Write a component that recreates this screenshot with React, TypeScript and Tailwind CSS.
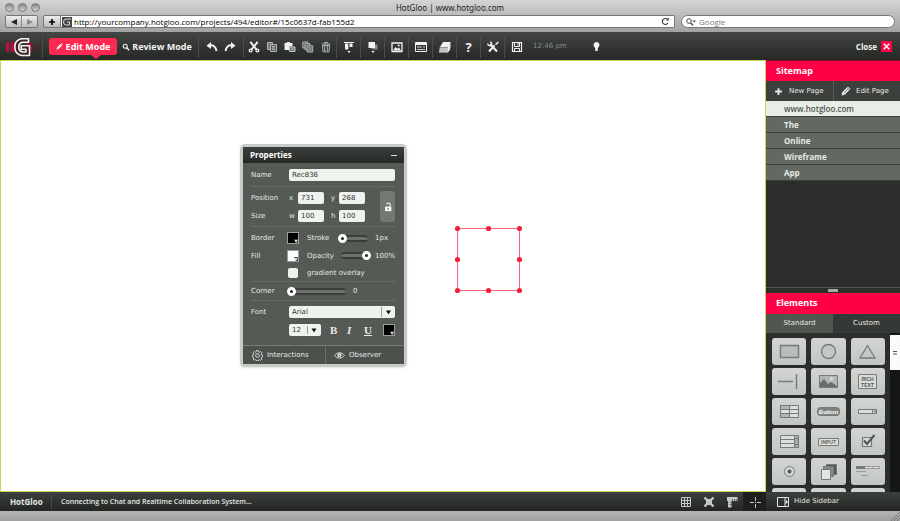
import React, { useState } from 'react';

type IconProps = { children: React.ReactNode; size?: number; className?: string };

const Icon: React.FC<IconProps> = ({ children, size = 12, className = '' }) => (
  <svg width={size} height={size} viewBox="0 0 12 12" fill="none" stroke="currentColor" className={className} aria-hidden="true">
    {children}
  </svg>
);

const icons = {
  undo: (
    <>
      <path d="M3.500 4.500C7 3.600 9.800 5.500 10.500 10" strokeWidth="1.900" />
      <path d="M.5 4.800L5 1v7z" fill="currentColor" stroke="none" />
    </>
  ),
  redo: (
    <>
      <path d="M8.500 4.500C5 3.600 2.200 5.500 1.500 10" strokeWidth="1.900" />
      <path d="M11.500 4.800L7 1v7z" fill="currentColor" stroke="none" />
    </>
  ),
  cut: (
    <>
      <path d="M2.300.8l6.200 7.700M9.700.8L3.500 8.500" strokeWidth="1.900" />
      <circle cx="2.600" cy="9.500" r="1.400" strokeWidth="1.300" />
      <circle cx="9.400" cy="9.500" r="1.400" strokeWidth="1.300" />
    </>
  ),
  copy: (
    <g strokeWidth="1">
      <path d="M4 8.500H1.500v-7h5V3" fill="#777b77" />
      <path d="M4.500 3.500h6v7h-6z" fill="#555a55" />
      <path d="M6 5.500h3M6 7h3M6 8.500h3" />
    </g>
  ),
  paste: (
    <>
      <path d="M.5 2h2.200V1h3.300v1H8.500v3.500H5V9H.5z" fill="currentColor" stroke="none" />
      <path d="M5.500 6h5.500v4.500H5.500z" fill="#6c706c" stroke="#c8ccc8" />
      <path d="M7 8.200h3" stroke="#c8ccc8" />
    </>
  ),
  duplicate: (
    <g fill="#5c605c">
      <path d="M.8 1h5v6h-5z" />
      <path d="M3 2.800h5v6H3z" />
      <path d="M5.200 4.800h5.500v6.200H5.200z" />
      <path d="M6.500 7h3M6.500 9h3" />
    </g>
  ),
  trash: (
    <>
      <path d="M1.500 3h9M4.500 2.500v-1h3v1" />
      <path d="M2.500 4.500h7L9 10.800H3z" />
      <path d="M4.700 5v5M7.300 5v5" />
    </>
  ),
  align: (
    <>
      <path d="M1 1.500h10" />
      <path d="M2 2.500h3.300v6H2zM6.500 2.500h3v3.500h-3z" fill="currentColor" stroke="none" />
      <path d="M4.300 10h3.400L6 12z" fill="currentColor" stroke="none" />
    </>
  ),
  arrange: (
    <>
      <path d="M4.500 3.500h6v5h-6z" fill="#8a8e8a" stroke="none" />
      <path d="M1.500 1h6.500v6h-6.500z" fill="currentColor" stroke="none" />
      <path d="M4.300 10h3.400L6 12z" fill="currentColor" stroke="none" />
    </>
  ),
  image: (
    <>
      <path d="M1 2h10v8.500H1z" strokeWidth="1.300" />
      <path d="M2 9.500l2.500-3.500 2 1.700L8 6.500l2 3z" fill="currentColor" stroke="none" />
      <circle cx="7.700" cy="4.500" r="1" fill="currentColor" stroke="none" />
    </>
  ),
  form: (
    <>
      <path d="M.5 1.500h11v9H.5z" />
      <path d="M1 3h10" strokeWidth="2" />
      <path d="M2 6h5M2 8.500h8M8 6h2" strokeWidth=".8" />
    </>
  ),
  layers: (
    <>
      <path d="M4 1h8L9.500 6H1z" fill="currentColor" stroke="none" />
      <path d="M.5 7.200h8.700L11.500 3.500M.3 9h8.700L11.300 5.500M0 10.800h8.700L11 7.500" strokeWidth="1.300" />
    </>
  ),
  tools: (
    <>
      <path d="M3 3l7 7.500M7.500 4.500L2 10.500" strokeWidth="2" />
      <path d="M.8 2.500a2 2 0 0 0 3.500 1.500A2 2 0 0 0 3 .8" strokeWidth="1.300" />
      <path d="M11.300 1L8.500 3.800" strokeWidth="1.500" />
    </>
  ),
  save: (
    <>
      <path d="M1.500 1.500h9v9h-9z" strokeWidth="1.200" />
      <path d="M3.500 1.500v4h5v-4M3.500 10.500v-3h5v3M7 2v2.500" />
    </>
  ),
  bulb: (
    <path d="M6 1a3.400 3.400 0 0 0-2 6c.4.400.6.900.6 1.500v1.500c0 .6.600 1 1.400 1s1.400-.4 1.400-1V8.500c0-.6.200-1.100.6-1.500a3.400 3.400 0 0 0-2-6z" fill="currentColor" stroke="none" />
  ),
  search: (
    <>
      <circle cx="4.800" cy="4.800" r="3" strokeWidth="1.700" />
      <path d="M7 7l3.800 3.800" strokeWidth="2.200" />
    </>
  ),
  pencil: <path d="M.8 11.200l1-3.600L8 1.500l2.500 2.500L4.400 10.200zM8.700 1L9.500.3l2.200 2.200-.7.800z" fill="currentColor" stroke="none" />,
  crayon: (
    <>
      <path d="M.5 11.500l1-4L8.300.7l3 3L4.500 10.500z" fill="currentColor" stroke="none" />
      <path d="M3.300 8.700l5.700-5.700M7.300 1.800l3 3" stroke="#3a3d3a" strokeWidth=".7" />
    </>
  ),
  plus: <path d="M6 1.500v9M1.500 6h9" strokeWidth="2.400" />,
  close: <path d="M3 3l6 6M9 3L3 9" strokeWidth="1.800" />,
  reload: (
    <>
      <path d="M9.200 8A4 4 0 1 1 8.500 3" strokeWidth="1.400" />
      <path d="M6.800 4.500h3.500V.8z" fill="currentColor" stroke="none" />
    </>
  ),
  gear: (
    <>
      <path d="M5 .6h2l.3 1.500 1 .4 1.300-.9 1.400 1.500-.9 1.200.4 1 1.100.2v2l-1.200.3-.4 1 .8 1.200-1.400 1.300-1.200-.8-1 .4-.2 1.100H5l-.3-1.200-1-.4-1.200.8-1.400-1.400.9-1.200-.4-1-1.200-.2v-2l1.300-.2.4-1-.9-1.300 1.400-1.300 1.200.8 1-.4z" strokeWidth=".9" />
      <circle cx="6" cy="6" r="2" />
    </>
  ),
  eye: (
    <>
      <path d="M.6 6C3.300 2 8.700 2 11.400 6 8.700 9.800 3.300 9.800.6 6z" />
      <circle cx="6" cy="5.800" r="2.200" fill="currentColor" stroke="none" />
      <circle cx="6" cy="5.800" r=".7" fill="#4b504b" stroke="none" />
    </>
  ),
  unlock: (
    <>
      <path d="M2.500 5.500h7.500v5.500H2.500z" fill="currentColor" stroke="none" />
      <path d="M8.500 5.500V3.500a2 2 0 0 0-4-.5" strokeWidth="1.300" />
      <path d="M6.200 7v2.500" stroke="#555" strokeWidth="1.200" />
    </>
  ),
  grid: <path d="M1.500 1.500h9v9h-9zM1.500 4.500h9M1.500 7.500h9M4.500 1.500v9M7.500 1.500v9" />,
  snap: (
    <>
      <path d="M3 3h6v6H3z" fill="currentColor" stroke="none" />
      <path d="M1.500 1.500L4 4M10.500 1.500L8 4M1.500 10.500L4 8M10.500 10.500L8 8" strokeWidth="2.400" />
    </>
  ),
  ruler: (
    <>
      <path d="M1 1h10.500v4H5.500v6.500H2V5H1z" fill="currentColor" stroke="none" />
      <path d="M6.500 3v2M8.500 3v2M10.300 3v2M3.500 6.500h2M3.500 8.500h2" stroke="#2b2e2b" strokeWidth=".6" />
    </>
  ),
  guides: <path d="M6.500 1v4M6.500 6v1M6.500 8v4M1 6.500h4M8 6.500h4" />,
  sidebar: (
    <>
      <path d="M.5 1.500h11v9H.5zM8 1.500v9" />
      <path d="M8.700 3.800l2.300 2.200-2.300 2.200z" fill="currentColor" stroke="none" />
    </>
  ),
};

const Logo = () => (
  <svg width="32" height="20" viewBox="0 0 32 20" fill="none" aria-label="HotGloo" role="img">
    <path d="M1 5.500h3v9H1z" fill="#c51040" />
    <path d="M5.500 5h5v10h-5z" fill="#a81438" />
    <path d="M22 5h5v10h-5z" fill="#8a1634" />
    <path d="M28.500 6h2v8h-2z" fill="#5a2029" />
    <path
      d="M23.500 1.800H16.500C12 2.800 9.800 5.800 9.800 10s2.200 7.500 6.700 8.500h8V8.800h-8.300v3.400h4.800v2.800h-3.800C14.800 14.200 13.800 12.500 13.800 10s1-4 3.400-4.800h6.300z"
      fill="#3d2428"
      stroke="#f5f5f5"
      strokeWidth="1.600"
      strokeLinejoin="round"
    />
  </svg>
);

type Tool = { label: string; icon: React.ReactNode; dim?: boolean };

const toolGroups: Tool[][] = [
  [
    { label: 'Undo', icon: icons.undo },
    { label: 'Redo', icon: icons.redo },
  ],
  [
    { label: 'Cut', icon: icons.cut },
    { label: 'Copy', icon: icons.copy, dim: true },
    { label: 'Paste', icon: icons.paste },
    { label: 'Duplicate', icon: icons.duplicate, dim: true },
    { label: 'Delete', icon: icons.trash, dim: true },
  ],
  [{ label: 'Align', icon: icons.align }],
  [{ label: 'Arrange', icon: icons.arrange }],
  [{ label: 'Images', icon: icons.image }],
  [{ label: 'Forms', icon: icons.form }],
  [{ label: 'Layers', icon: icons.layers }],
  [{ label: 'Help', icon: null }],
  [{ label: 'Settings', icon: icons.tools }],
  [{ label: 'Save', icon: icons.save }],
];

const BrowserChrome = () => (
  <header className="h-8 shrink-0 bg-linear-to-b from-[#d4d4d4] to-[#a2a2a2] px-[5px] text-black">
    <div className="relative flex h-[15px] items-center justify-center">
      <div className="absolute left-0 flex gap-1">
        {['Close window', 'Minimize', 'Zoom'].map((label) => (
          <button key={label} aria-label={label} className="size-[9px] rounded-full border border-[#777] bg-linear-to-b from-[#888] to-[#d5d5d5]" />
        ))}
      </div>
      <h1 className="font-['Noto_Sans',sans-serif] text-[8px] leading-3 text-[#222]">HotGloo | www.hotgloo.com</h1>
    </div>
    <div className="flex h-[13px] items-stretch">
      <div className="flex w-[33px] rounded-[2px] border border-[#777] bg-linear-to-b from-[#eee] to-[#bbb]">
        <button aria-label="Back" className="flex flex-1 items-center justify-center border-r border-[#888]">
          <svg width="6" height="6" viewBox="0 0 6 6"><path d="M0 3l6-3v6z" fill="#222" /></svg>
        </button>
        <button aria-label="Forward" className="flex flex-1 items-center justify-center">
          <svg width="6" height="6" viewBox="0 0 6 6"><path d="M6 3L0 0v6z" fill="#888" /></svg>
        </button>
      </div>
      <button aria-label="Add bookmark" className="ml-[5px] flex w-[18px] items-center justify-center rounded-l-[2px] border border-[#777] bg-linear-to-b from-[#eee] to-[#bbb]">
        <Icon size={8}>{icons.plus}</Icon>
      </button>
      <div className="flex min-w-0 flex-1 items-center gap-[2px] rounded-r-[2px] border border-l-0 border-[#777] bg-white pl-px pr-1">
        <svg width="10" height="10" viewBox="0 0 10 10" fill="none" className="shrink-0">
          <path d="M0 0h10v10H0z" fill="#444" />
          <path d="M9 2H4.500a3 3 0 0 0 0 6H7.500V5H5" stroke="#ddd" />
        </svg>
        <input
          aria-label="Address"
          defaultValue="http://yourcompany.hotgloo.com/projects/494/editor#/15c0637d-fab155d2"
          className="min-w-0 flex-1 bg-transparent font-['Open_Sans',sans-serif] text-[8px] leading-[11px] outline-none"
        />
        <button aria-label="Reload" className="text-[#333]"><Icon size={9}>{icons.reload}</Icon></button>
      </div>
      <label className="ml-[6px] flex w-[214px] items-center gap-[3px] rounded-full border border-[#777] bg-white px-1 text-[#444]">
        <svg width="10" height="8" viewBox="0 0 10 8" fill="none" stroke="currentColor">
          <circle cx="3" cy="3" r="2.300" />
          <path d="M4.800 4.800L7 7.500" strokeWidth="1.300" />
          <path d="M6.500 2.500H10L8.200 4.500z" fill="currentColor" stroke="none" />
        </svg>
        <input aria-label="Search Google" placeholder="Google" className="min-w-0 flex-1 bg-transparent font-['Open_Sans',sans-serif] text-[8px] leading-[11px] outline-none placeholder:text-[#777]" />
      </label>
    </div>
  </header>
);

const Toolbar = () => (
  <nav className="flex h-7 shrink-0 items-center bg-linear-to-b from-[#434643] to-[#252825] pt-px text-[#f2f2f2]">
    <div className="flex w-[42px] justify-center"><Logo /></div>
    <div className="flex h-[22px] items-center gap-[5px] border-l border-[#4a4d4a] px-[6px]">
      <button className="relative flex h-[17px] w-[68px] items-center justify-center gap-[3px] whitespace-nowrap rounded-[3px] bg-[#ff2850] text-[9px] font-bold leading-3 text-white">
        <Icon size={7}>{icons.pencil}</Icon>
        Edit Mode
        <svg className="absolute left-[41px] top-[16px]" width="12" height="5" viewBox="0 0 12 5"><path d="M0 0h12L6 5z" fill="#ff2850" /></svg>
      </button>
      <button className="flex h-[17px] w-[70px] items-center justify-center gap-[2px] whitespace-nowrap text-[9px] font-bold leading-3">
        <Icon size={8}>{icons.search}</Icon>
        Review Mode
      </button>
    </div>
    {toolGroups.map((group) => (
      <div key={group[0].label} className={`flex h-[22px] items-center justify-center border-l border-[#4a4d4a] ${group.length === 2 ? 'w-[45px]' : group.length > 2 ? 'w-[93px]' : 'w-6'}`}>
        {group.map((tool) => (
          <button key={tool.label} aria-label={tool.label} className={`flex w-[18px] items-center justify-center ${tool.dim ? 'text-[#b4b8b4]' : ''}`}>
            {tool.icon ? <Icon>{tool.icon}</Icon> : <span className="text-[13px] font-bold leading-4">?</span>}
          </button>
        ))}
      </div>
    ))}
    <time className="ml-[5px] w-[58px] font-['DejaVu_Sans',sans-serif] text-[7px] text-[#8b8f8b]">12:46 pm</time>
    <button aria-label="Tips"><Icon size={11}>{icons.bulb}</Icon></button>
    <button className="ml-auto mr-2 flex items-center gap-1 text-[8px] font-bold leading-3">
      Close
      <span className="bg-[#ff0044]"><Icon size={11}>{icons.close}</Icon></span>
    </button>
  </nav>
);

const field = 'h-3 rounded-[2px] border-0 bg-[#eef3ee] px-[3px] text-[7px] text-[#333] outline-none';
const range =
  'h-[7px] appearance-none rounded-full border-y-2 border-[#3a3e3a] bg-[#6c716c] outline-none [&::-webkit-slider-thumb]:size-[9px] [&::-webkit-slider-thumb]:appearance-none [&::-webkit-slider-thumb]:rounded-full [&::-webkit-slider-thumb]:border-[3px] [&::-webkit-slider-thumb]:border-white [&::-webkit-slider-thumb]:bg-[#222]';

const Swatch = ({ label, white }: { label: string; white?: boolean }) => (
  <button aria-label={label} className={`flex size-3 items-end justify-end border border-[#9a9e9a] ${white ? 'bg-white' : 'bg-black'}`}>
    <svg width="5" height="4" viewBox="0 0 5 4"><path d="M1 0h4v4H3z" fill="#444944" /><path d="M1.300 1.200h3.400L3 3.500z" fill="#fff" /></svg>
  </button>
);

const PairRow = ({ title, a, b, first, second }: { title: string; a: string; b: string; first: string; second: string }) => (
  <div className="flex h-[18px] items-center">
    <span className="w-[38px]">{title}</span>
    <label className="flex w-[42px] items-center">
      <span className="w-[9px]">{a}</span>
      <input defaultValue={first} className={`${field} w-[26px]`} />
    </label>
    <label className="flex items-center">
      <span className="w-2">{b}</span>
      <input defaultValue={second} className={`${field} w-[26px]`} />
    </label>
  </div>
);

const PropertiesPanel = () => {
  const [stroke, setStroke] = useState(1);
  const [opacity, setOpacity] = useState(100);
  const [corner, setCorner] = useState(0);

  return (
    <section className="absolute left-[239px] top-[83px] w-[167px] rounded-[5px] border-[3px] border-[#c8ccc8] bg-[#555a55] font-['DejaVu_Sans',sans-serif] text-[7px] leading-[10px] text-[#e4e8e4] shadow-sm">
      <div className="flex h-4 items-center justify-between bg-linear-to-b from-[#3d413d] to-[#262926] px-[7px]">
        <h2 className="font-['Open_Sans',sans-serif] text-[8px] font-bold text-white">Properties</h2>
        <button aria-label="Minimize panel" className="h-px w-[6px] bg-[#ddd]" />
      </div>
      <div className="pl-2 pr-[9px]">
        <label className="flex h-6 items-center border-b border-[#666b66]">
          <span className="w-[38px]">Name</span>
          <input defaultValue="Rec836" className={`${field} min-w-0 flex-1`} />
        </label>
        <div className="flex h-10 items-center justify-between border-b border-[#666b66]">
          <div>
            <PairRow title="Position" a="x" b="y" first="731" second="268" />
            <PairRow title="Size" a="w" b="h" first="100" second="100" />
          </div>
          <button aria-label="Lock proportions" className="flex h-[31px] w-[15px] items-center justify-center rounded-[3px] bg-[#737873] text-white">
            <Icon size={10}>{icons.unlock}</Icon>
          </button>
        </div>
        <div className="border-b border-[#666b66] pt-[2px]">
          <div className="flex h-[18px] items-center">
            <span className="w-9">Border</span>
            <Swatch label="Border colour" />
            <label className="ml-2 flex flex-1 items-center">
              <span className="w-[31px]">Stroke</span>
              <input type="range" min="1" max="20" value={stroke} onChange={(e) => setStroke(Number(e.target.value))} className={`${range} w-[30px]`} />
            </label>
            <output className="w-5">{stroke}px</output>
          </div>
          <div className="flex h-[17px] items-center">
            <span className="w-9">Fill</span>
            <Swatch label="Fill colour" white />
            <label className="ml-2 flex flex-1 items-center">
              <span className="w-[34px]">Opacity</span>
              <input type="range" value={opacity} onChange={(e) => setOpacity(Number(e.target.value))} className={`${range} w-[30px]`} />
            </label>
            <output className="w-5">{opacity}%</output>
          </div>
          <label className="flex h-[17px] items-center pl-[37px]">
            <input type="checkbox" className="mr-[9px] size-[10px] appearance-none rounded-[2px] bg-[#eef3ee] checked:bg-[#ff2850]" />
            gradient overlay
          </label>
        </div>
        <div className="flex h-[19px] items-center border-b border-[#666b66]">
          <label className="flex items-center">
            <span className="w-9">Corner</span>
            <input type="range" value={corner} onChange={(e) => setCorner(Number(e.target.value))} className={`${range} w-[59px]`} />
          </label>
          <output className="ml-[7px]">{corner}</output>
        </div>
        <label className="flex h-[22px] items-center">
          <span className="w-[38px]">Font</span>
          <span className="relative flex flex-1">
            <select className={`${field} w-full appearance-none`}>
              <option>Arial</option>
              <option>Georgia</option>
            </select>
            <svg className="pointer-events-none absolute right-0 top-0" width="14" height="12" viewBox="0 0 14 12"><path d="M.5 1v10" stroke="#999" /><path d="M5 4.500h5L7.500 8.500z" fill="#111" /></svg>
          </span>
        </label>
        <div className="flex h-[22px] items-start pl-[38px] pt-px font-['Liberation_Serif',serif] text-[11px] text-[#e8ece8]">
          <span className="relative mr-[9px] flex">
            <select aria-label="Font size" className={`${field} w-8 appearance-none font-['DejaVu_Sans',sans-serif]`}>
              <option>12</option>
              <option>14</option>
            </select>
            <svg className="pointer-events-none absolute right-0 top-0" width="14" height="12" viewBox="0 0 14 12"><path d="M.5 2v8" stroke="#999" /><path d="M4.500 4.500h5L7 8.500z" fill="#111" /></svg>
          </span>
          <button aria-label="Bold" className="w-[17px] text-left font-bold leading-3">B</button>
          <button aria-label="Italic" className="w-[17px] text-left font-bold italic leading-3">I</button>
          <button aria-label="Underline" className="w-[17px] text-left font-bold underline leading-3">U</button>
          <span className="ml-auto flex"><Swatch label="Text colour" /></span>
        </div>
      </div>
      <div className="flex h-[19px] border-t border-[#777c77] bg-[#4c514c]">
        <button className="flex w-[83px] items-center gap-[4px] border-r border-[#6a6f6a] pl-[9px]">
          <Icon size={11}>{icons.gear}</Icon>
          Interactions
        </button>
        <button className="flex flex-1 items-center gap-[4px] pl-2">
          <Icon size={11}>{icons.eye}</Icon>
          Observer
        </button>
      </div>
    </section>
  );
};

const handles = [
  [3, 3], [34, 3], [65, 3],
  [3, 34], [65, 34],
  [3, 65], [34, 65], [65, 65],
];

const SelectedShape = () => (
  <svg className="absolute left-[453px] top-[164px]" width="69" height="69" viewBox="0 0 69 69" role="img" aria-label="Rec836">
    <path d="M3.500 3.500h62v62h-62z" fill="#fff" stroke="#f2667c" />
    {handles.map(([x, y]) => (
      <circle key={`${x}-${y}`} cx={x + 0.5} cy={y + 0.5} r="2.600" fill="#f0203f" />
    ))}
  </svg>
);

const pages = ['www.hotgloo.com', 'The', 'Online', 'Wireframe', 'App'];

const gray = '#777b77';

const elements: { label: string; art: React.ReactNode }[] = [
  { label: 'Rectangle', art: <path d="M7.500 7.500h18v12h-18z" strokeWidth="1.400" fill="#b9bcb9" /> },
  { label: 'Ellipse', art: <circle cx="16.500" cy="13.500" r="7" strokeWidth="1.400" fill="#c4c7c4" /> },
  { label: 'Triangle', art: <path d="M16.500 7.500l7.500 12.500h-15z" strokeWidth="1.300" fill="#c4c7c4" /> },
  { label: 'Line', art: <path d="M5 13.500h15M23.500 6v15" strokeWidth="1.400" /> },
  {
    label: 'Image',
    art: (
      <>
        <path d="M7.500 7.500h18v12h-18z" fill="#b3b7b3" />
        <path d="M8 19v-4l4-4 4 5 3-2 6 4v1z" fill="#6b6f6b" stroke="none" />
        <circle cx="19.500" cy="11" r="1.700" fill="#dcdfdc" stroke="none" />
      </>
    ),
  },
  {
    label: 'Rich text',
    art: (
      <>
        <path d="M7.500 6.500h18v14h-18z" fill="#d8dbd8" />
        <text x="16.500" y="12.500" textAnchor="middle" fontSize="5" fontWeight="bold" fill="#555" stroke="none">RICH</text>
        <text x="16.500" y="18.500" textAnchor="middle" fontSize="5" fontWeight="bold" fill="#555" stroke="none">TEXT</text>
      </>
    ),
  },
  {
    label: 'Table',
    art: (
      <>
        <path d="M7.500 7.500h18v12h-18z" fill="#dcdfdc" />
        <path d="M7.500 7.500h9v4h-9zM7.500 15.500h9v4h-9z" fill="#b3b7b3" />
        <path d="M7.500 11.500h18M7.500 15.500h18M16.500 7.500v12" />
      </>
    ),
  },
  {
    label: 'Button',
    art: (
      <>
        <rect x="5.500" y="9.500" width="22" height="8" rx="3" fill="#7d817d" />
        <text x="16.500" y="16" textAnchor="middle" fontSize="6" fontWeight="bold" fill="#fff" stroke="none">Button</text>
      </>
    ),
  },
  {
    label: 'Drop-down',
    art: (
      <>
        <path d="M7.500 11.500h18v4h-18z" fill="#dcdfdc" />
        <path d="M21.500 11.500v4M23 13h2l-1 1.500z" />
      </>
    ),
  },
  {
    label: 'List box',
    art: (
      <>
        <path d="M7.500 7.500h14v12h-14z" fill="#dcdfdc" />
        <path d="M7.500 11.500h14M7.500 15.500h14" />
        <path d="M21.500 7.500h4v12h-4zM21.500 10.500h4M21.500 16.500h4" fill="#a8aca8" />
      </>
    ),
  },
  {
    label: 'Input',
    art: (
      <>
        <path d="M6.500 10.500h20v7h-20z" fill="#dcdfdc" />
        <text x="16.500" y="16" textAnchor="middle" fontSize="5" fontWeight="bold" fill="#666" stroke="none">INPUT</text>
      </>
    ),
  },
  {
    label: 'Checkbox',
    art: (
      <>
        <path d="M11.500 9.500h9v9h-9z" strokeWidth="1.200" fill="#d4d7d4" />
        <path d="M13 12.500l3 3.500 7.500-9" stroke="#505450" strokeWidth="2" />
      </>
    ),
  },
  {
    label: 'Radio button',
    art: (
      <>
        <circle cx="16.500" cy="13.500" r="5" fill="#d4d7d4" />
        <circle cx="16.500" cy="13.500" r="2" fill="#555" stroke="none" />
      </>
    ),
  },
  {
    label: 'Repeater',
    art: (
      <>
        <path d="M14.500 6.500h10v10h-10z" fill="#555" />
        <path d="M11.500 8.500h10v10h-10z" fill="#888" />
        <path d="M9.500 11.500h9v10h-9z" fill="#e2e5e2" />
      </>
    ),
  },
  {
    label: 'Menu',
    art: (
      <>
        <path d="M5.500 8.500h8v2h-8zM13.500 8.500h8v2h-8zM21.500 8.500h7v2h-7z" fill="#ddd" stroke="#999" />
        <path d="M5.500 8.500h8v2h-8z" fill="#777" />
        <path d="M5 13.500h10M10 17.500h7" stroke="#999" />
      </>
    ),
  },
  { label: 'Panel', art: <path d="M7.500 7.500h18v12h-18z" /> },
  { label: 'Tabs', art: <path d="M7.500 7.500h18v12h-18z" /> },
  { label: 'Slider', art: <path d="M7.500 13.500h18" /> },
];

const Sidebar = () => (
  <aside className="flex min-h-0 flex-1 flex-col bg-[#2b2e2b] text-[#e6eae6]">
    <h2 className="h-5 shrink-0 bg-[#ff0044] pl-[10px] text-[9px] font-bold leading-[19px] text-white">Sitemap</h2>
    <div className="flex h-5 shrink-0 bg-[#3c403c] font-['DejaVu_Sans',sans-serif] text-[7px]">
      <button className="flex flex-1 items-center gap-[6px] border-r border-[#5a5e5a] pl-2"><Icon size={9}>{icons.plus}</Icon>New Page</button>
      <button className="flex flex-1 items-center gap-[5px] pl-[7px]"><Icon size={10}>{icons.crayon}</Icon>Edit Page</button>
    </div>
    <ul className="min-h-0 flex-1 text-[8px] leading-[15px]">
      {pages.map((page, i) => (
        <li key={page} className={`border-b border-[#3c403c] pl-[18px] ${i === 0 ? 'bg-[#e8ede8] font-semibold text-[#4e534e]' : 'bg-[#636863] font-bold'}`}>
          <a href="#page">{page}</a>
        </li>
      ))}
    </ul>
    <div className="flex h-[6px] shrink-0 items-center justify-center border-t border-[#555955]"><span className="h-[3px] w-[10px] bg-[#a5a9a5]" /></div>
    <h2 className="h-[21px] shrink-0 bg-[#ff0044] pl-[10px] text-[9px] font-bold leading-[19px] text-white">Elements</h2>
    <div role="tablist" className="flex h-[19px] shrink-0 font-['DejaVu_Sans',sans-serif] text-[7px]">
      <button role="tab" aria-selected="true" className="flex-1 bg-[#515651]">Standard</button>
      <button role="tab" aria-selected="false" className="flex-1 bg-[#353935]">Custom</button>
    </div>
    <div className="flex h-[159px] shrink-0 overflow-hidden">
      <div className="grid flex-1 auto-rows-[27px] grid-cols-3 gap-x-[5px] gap-y-[3px] pl-[6px] pr-[5px] pt-[5px]">
        {elements.map((el) => (
          <button key={el.label} aria-label={el.label} className="flex items-center justify-center rounded-[3px] bg-linear-to-b from-[#d2d5d2] to-[#c2c6c2]">
            <svg width="33" height="27" viewBox="0 0 33 27" fill="none" stroke={gray} className="font-['Liberation_Sans',sans-serif]">{el.art}</svg>
          </button>
        ))}
      </div>
      <div className="w-[10px] bg-[#151715] pt-[2px]">
        <div className="flex h-[35px] items-center justify-center bg-[#fafafa]">
          <svg width="4" height="4" viewBox="0 0 4 4"><path d="M0 .5h4M0 3h4" stroke="#555" /></svg>
        </div>
      </div>
    </div>
  </aside>
);

const App: React.FC = () => (
  <div className="flex h-screen flex-col overflow-hidden bg-[#a8a8a8] font-['Open_Sans',sans-serif]">
    <BrowserChrome />
    <Toolbar />
    <div className="flex min-h-0 flex-1">
      <div className="flex min-w-0 flex-1 flex-col">
        <main className="relative min-h-0 flex-1 overflow-hidden border border-[#cfd25a] bg-white">
          <PropertiesPanel />
          <SelectedShape />
        </main>
        <footer className="flex h-[19px] shrink-0 items-center bg-linear-to-b from-[#3d413d] to-[#232623] text-[#e4e8e4]">
          <strong className="w-[52px] border-r border-[#4a4d4a] pl-[10px] text-[8px] leading-[14px]">HotGloo</strong>
          <p className="pl-[9px] text-[7px] font-semibold leading-[14px]">Connecting to Chat and Realtime Collaboration System...</p>
          <div className="ml-auto flex h-full text-[#c5c9c5]">
            {[
              ['Grid', icons.grid],
              ['Snap', icons.snap],
              ['Rulers', icons.ruler],
              ['Guides', icons.guides],
            ].map(([label, icon]) => (
              <button key={label as string} aria-label={label as string} className="flex w-[23px] items-center justify-center last:bg-[#1c1f1c]">
                <Icon size={12}>{icon}</Icon>
              </button>
            ))}
          </div>
        </footer>
      </div>
      <div className="flex w-[134px] shrink-0 flex-col border-t border-[#7a1028] bg-[#2b2e2b]">
        <Sidebar />
        <button className="flex h-[19px] shrink-0 items-center gap-[5px] bg-linear-to-b from-[#3d413d] to-[#232623] pl-[11px] font-['DejaVu_Sans',sans-serif] text-[7px] text-[#e4e8e4]">
          <Icon size={12}>{icons.sidebar}</Icon>
          Hide Sidebar
        </button>
      </div>
    </div>
    <div className="flex h-[10px] shrink-0 items-end justify-end bg-linear-to-b from-[#b4b4b4] to-[#a0a0a0]">
      <svg width="9" height="9" viewBox="0 0 9 9" stroke="#777"><path d="M0 9l9-9M3 9l6-6M6 9l3-3" /></svg>
    </div>
  </div>
);

export default App;
